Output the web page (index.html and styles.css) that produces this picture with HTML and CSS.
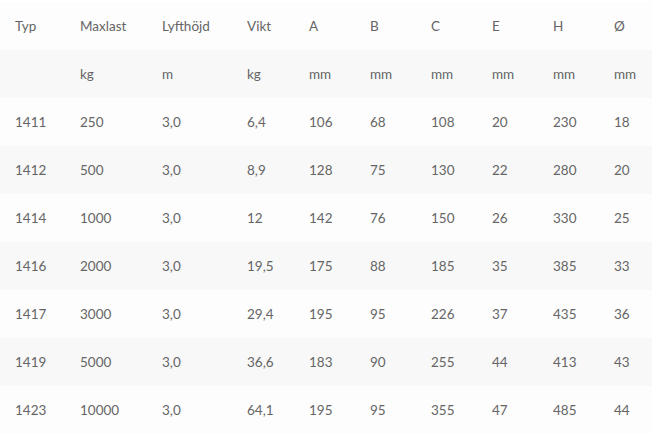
FILE: index.html
```html
<!DOCTYPE html>
<html lang="sv">
<head>
<meta charset="utf-8">
<link rel="stylesheet" href="styles.css">
</head>
<body>
<table class="spec">
  <colgroup>
    <col class="c-typ"><col class="c-max"><col class="c-lyft"><col class="c-vikt">
    <col class="c-mm"><col class="c-mm"><col class="c-mm"><col class="c-mm"><col class="c-mm"><col class="c-last">
  </colgroup>
  <tbody>
    <tr><td>Typ</td><td>Maxlast</td><td>Lyfthöjd</td><td>Vikt</td><td>A</td><td>B</td><td>C</td><td>E</td><td>H</td><td>Ø</td></tr>
    <tr><td></td><td>kg</td><td>m</td><td>kg</td><td>mm</td><td>mm</td><td>mm</td><td>mm</td><td>mm</td><td>mm</td></tr>
    <tr><td>1411</td><td>250</td><td>3,0</td><td>6,4</td><td>106</td><td>68</td><td>108</td><td>20</td><td>230</td><td>18</td></tr>
    <tr><td>1412</td><td>500</td><td>3,0</td><td>8,9</td><td>128</td><td>75</td><td>130</td><td>22</td><td>280</td><td>20</td></tr>
    <tr><td>1414</td><td>1000</td><td>3,0</td><td>12</td><td>142</td><td>76</td><td>150</td><td>26</td><td>330</td><td>25</td></tr>
    <tr><td>1416</td><td>2000</td><td>3,0</td><td>19,5</td><td>175</td><td>88</td><td>185</td><td>35</td><td>385</td><td>33</td></tr>
    <tr><td>1417</td><td>3000</td><td>3,0</td><td>29,4</td><td>195</td><td>95</td><td>226</td><td>37</td><td>435</td><td>36</td></tr>
    <tr><td>1419</td><td>5000</td><td>3,0</td><td>36,6</td><td>183</td><td>90</td><td>255</td><td>44</td><td>413</td><td>43</td></tr>
    <tr><td>1423</td><td>10000</td><td>3,0</td><td>64,1</td><td>195</td><td>95</td><td>355</td><td>47</td><td>485</td><td>44</td></tr>
  </tbody>
</table>
</body>
</html>
```
FILE: styles.css
```css
html, body {
  margin: 0;
  padding: 0;
  background: #ffffff;
}
body {
  padding-top: 2px;
}
.spec {
  width: 652px;
  table-layout: fixed;
  border-collapse: collapse;
  border-spacing: 0;
  font-family: Lato, "Open Sans", sans-serif;
  font-size: 13.5px;
  color: #656565;
}
.c-typ { width: 65px; }
.c-max { width: 82px; }
.c-lyft { width: 85px; }
.c-vikt { width: 62px; }
.c-mm { width: 61px; }
.c-last { width: 53px; }
.spec td {
  height: 48px;
  padding: 0 0 0 15px;
  vertical-align: middle;
  text-align: left;
  white-space: nowrap;
  line-height: 18px;
}
.spec tr:nth-child(odd) { background: #fdfdfd; }
.spec tr:nth-child(even) { background: #f8f8f8; }
```
